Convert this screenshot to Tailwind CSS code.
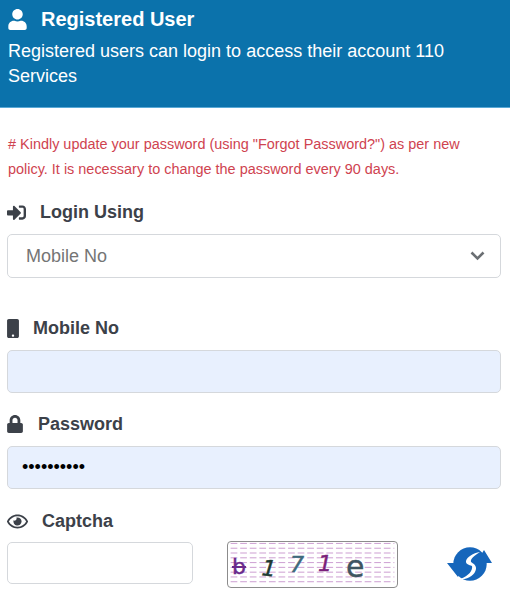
<!DOCTYPE html>
<html lang="en">

<head>
    <meta charset="UTF-8">
    <meta name="viewport" content="width=device-width, initial-scale=1.0">
    <title>Registered User</title>
    <script src="https://cdn.jsdelivr.net/npm/@tailwindcss/browser@4"></script>
</head>

<body class="bg-white font-['Liberation_Sans',Arial,sans-serif] overflow-hidden">
    <div class="w-[510px] h-[600px] overflow-hidden">
        <!-- header -->
        <div class="h-[108px] bg-[#0b72ab] border-b border-[#5aa9d6] pl-2 pt-[6px] text-white">
            <div class="flex items-center h-[26px]">
                <svg class="w-[19px] h-[21px] fill-white" viewBox="0 0 448 512"><path d="M224 256c70.7 0 128-57.3 128-128S294.7 0 224 0 96 57.3 96 128s57.3 128 128 128zm89.6 32h-16.7c-22.2 10.2-46.9 16-72.9 16s-50.6-5.8-72.9-16h-16.7C60.2 288 0 348.2 0 422.4V464c0 26.5 21.5 48 48 48h352c26.5 0 48-21.5 48-48v-41.6c0-74.2-60.2-134.4-134.4-134.4z"/></svg>
                <h1 class="ml-[14px] text-[20px] font-bold">Registered User</h1>
            </div>
            <p class="mt-[7px] text-[18px] leading-[25px] w-[470px]">Registered users can login to access their account 110 Services</p>
        </div>

        <!-- notice -->
        <p class="mt-[24px] px-2 text-[14.45px] leading-[25px] text-[#cf4350] w-[480px]"># Kindly update your password (using "Forgot Password?") as per new policy. It is necessary to change the password every 90 days.</p>

        <div class="px-[7px] text-[#3c4149]">
            <!-- login using -->
            <label class="mt-[18px] flex items-center h-[24px] font-bold text-[18px]">
                <svg class="w-[19px] h-[19px] fill-[#3c4149]" viewBox="0 0 512 512"><path d="M416 448h-84c-6.6 0-12-5.4-12-12v-40c0-6.6 5.4-12 12-12h84c17.7 0 32-14.3 32-32V160c0-17.7-14.3-32-32-32h-84c-6.6 0-12-5.4-12-12V76c0-6.6 5.4-12 12-12h84c53 0 96 43 96 96v192c0 53-43 96-96 96zm-47-201L201 79c-15-15-41-4.5-41 17v96H24c-13.3 0-24 10.7-24 24v96c0 13.3 10.7 24 24 24h136v96c0 21.5 26 32 41 17l168-168c9.3-9.4 9.3-24.6 0-34z"/></svg>
                <span class="ml-[14px]">Login Using</span>
            </label>
            <div class="relative mt-[10px]">
                <select class="w-[494px] h-[44px] pl-[18px] border border-[#d5d8dc] rounded-[5px] bg-white text-[18px] text-[#757575] appearance-none">
                    <option>Mobile No</option>
                </select>
                <svg class="absolute left-[463px] top-[17px] w-[15px] h-[10px]" viewBox="0 0 15 10" fill="none" stroke="#6b6f73" stroke-width="2.6"><path d="M1.5 1.5 7.5 7.5 13.5 1.5"/></svg>
            </div>

            <!-- mobile -->
            <label class="mt-[38px] flex items-center h-[24px] font-bold text-[18px]">
                <svg class="w-[12px] h-[19px] fill-[#3c4149]" viewBox="0 0 320 512"><path d="M272 0H48C21.5 0 0 21.5 0 48v416c0 26.5 21.5 48 48 48h224c26.5 0 48-21.5 48-48V48c0-26.5-21.5-48-48-48zM160 480c-17.7 0-32-14.3-32-32s14.3-32 32-32 32 14.3 32 32-14.3 32-32 32z"/></svg>
                <span class="ml-[14px]">Mobile No</span>
            </label>
            <input type="text" class="block mt-[10px] w-[494px] h-[43px] border border-[#d5d8dc] rounded-[5px] bg-[#e8f0fe]">

            <!-- password -->
            <label class="mt-[19px] flex items-center h-[24px] font-bold text-[18px]">
                <svg class="w-[16px] h-[18px] fill-[#3c4149]" viewBox="0 0 448 512"><path d="M400 224h-24v-72C376 68.2 307.8 0 224 0S72 68.2 72 152v72H48c-26.5 0-48 21.5-48 48v192c0 26.5 21.5 48 48 48h352c26.5 0 48-21.5 48-48V272c0-26.5-21.5-48-48-48zm-104 0H152v-72c0-39.7 32.3-72 72-72s72 32.3 72 72v72z"/></svg>
                <span class="ml-[15px]">Password</span>
            </label>
            <input type="password" value="1234567890" class="block mt-[10px] w-[494px] h-[43px] pl-[14px] border border-[#d5d8dc] rounded-[5px] bg-[#e8f0fe] text-[18px] text-black">

            <!-- captcha -->
            <label class="mt-[20px] flex items-center h-[24px] font-bold text-[18px]">
                <svg class="w-[21px] h-[19px] fill-[#3c4149]" viewBox="0 0 576 512"><path d="M288 144a110.94 110.94 0 0 0-31.24 5 55.4 55.4 0 0 1 7.24 27 56 56 0 0 1-56 56 55.4 55.4 0 0 1-27-7.24A111.71 111.71 0 1 0 288 144zm284.52 97.4C518.29 135.59 410.93 64 288 64S57.68 135.64 3.48 241.41a32.35 32.35 0 0 0 0 29.19C57.71 376.41 165.07 448 288 448s230.32-71.64 284.52-177.41a32.35 32.35 0 0 0 0-29.19zM288 400c-98.65 0-189.09-55-237.93-144C98.91 167 189.34 112 288 112s189.09 55 237.93 144C477.1 345 386.66 400 288 400z"/></svg>
                <span class="ml-[14px]">Captcha</span>
            </label>
            <div class="mt-[9px] flex items-start">
                <input type="text" class="w-[186px] h-[42px] border border-[#d5d8dc] rounded-[5px] bg-white">
                <div class="relative ml-[34px] w-[171px] h-[47px] -mt-[1px] border border-[#8c8c8c] rounded-[4px] overflow-hidden bg-white">
                    <svg class="absolute inset-0 w-full h-full" viewBox="0 0 171 47" fill="none" stroke="#cb9bd0" stroke-width="1" stroke-dasharray="7 3">
                        <path d="M0 1.5H171M0 6.5H171M0 11.5H171M0 16.5H171M0 21.5H171M0 26.5H171M0 31.5H171M0 36.5H171M0 41.5H171"/>
                    </svg>
                    <div class="relative h-full font-['DejaVu_Sans',sans-serif]">
                        <span class="absolute left-[4px] top-[8px] text-[22px] text-[#6a2a8c] line-through [-webkit-text-stroke:0.4px_#6a2a8c]">b</span>
                        <span class="absolute left-[34px] top-[10px] text-[22px] italic text-[#1f3a33] rotate-6 [-webkit-text-stroke:0.5px_#1f3a33]">1</span>
                        <span class="absolute left-[62px] top-[6px] text-[22px] italic text-[#3f6a7c] [-webkit-text-stroke:0.5px_#3f6a7c]">7</span>
                        <span class="absolute left-[90px] top-[5px] text-[22px] italic text-[#7a1f7a] [-webkit-text-stroke:0.5px_#7a1f7a]">1</span>
                        <span class="absolute left-[118px] top-[2px] text-[30px] text-[#3f5560] [-webkit-text-stroke:0.4px_#3f5560]">e</span>
                    </div>
                </div>
                <svg class="ml-[49px] mt-[3px] w-[46px] h-[40px]" viewBox="0 0 46 40">
                    <circle cx="23" cy="19" r="16.7" fill="#1666bb"/>
                    <path d="M0 18H17L11 32Z M45 18H29L37 5Z" fill="#1666bb"/>
                    <path d="M33 7C26 8 20 12 19 16C18.5 19 22 20 25 21C26 25 22 31 13 34C21 35 28 30 29 24C29.5 20 26 18.5 24 17C23 14 28 10 33 7Z" fill="white"/>
                </svg>
            </div>
        </div>
    </div>
</body>

</html>
